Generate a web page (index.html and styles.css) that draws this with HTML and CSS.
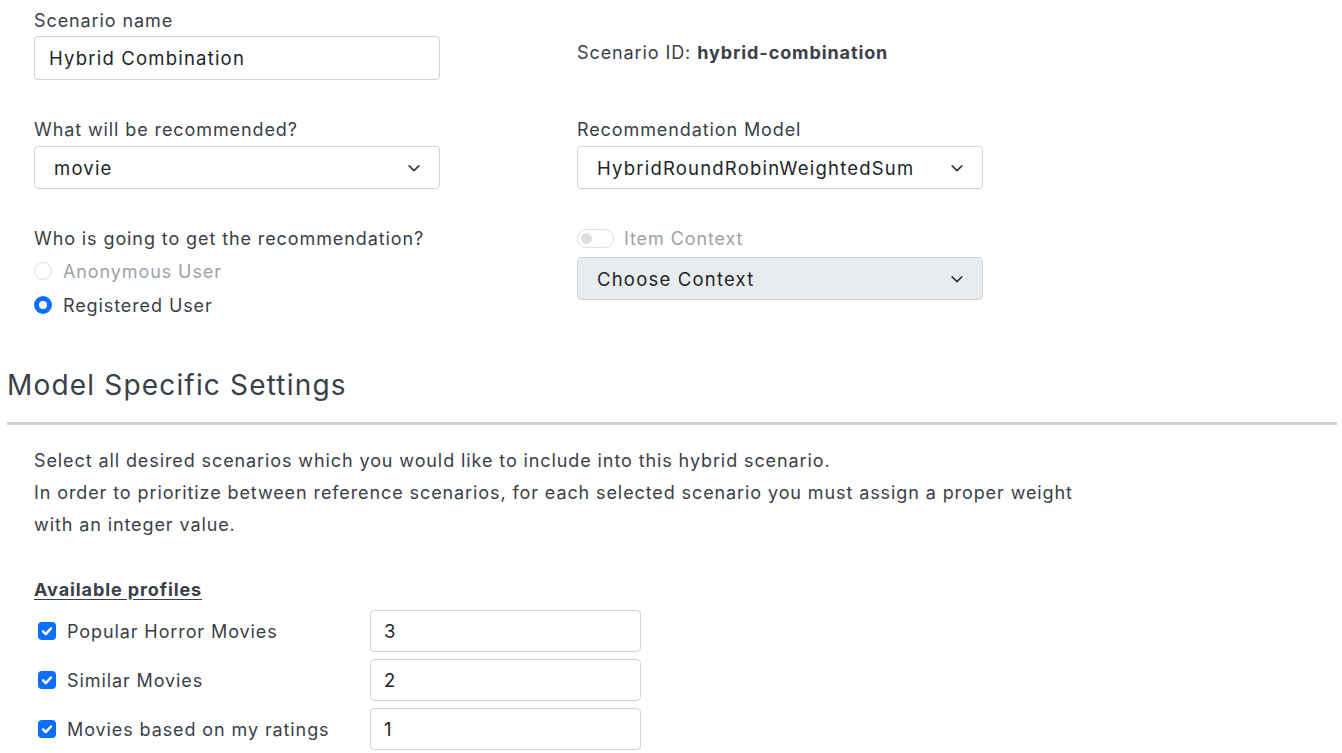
FILE: index.html
```html
<!DOCTYPE html>
<html>
<head>
<meta charset="utf-8">
<link rel="stylesheet" href="styles.css">
</head>
<body>
<div class="page">
  <div class="form-grid">
    <div class="field">
      <label class="label">Scenario name</label>
      <div class="input">Hybrid Combination</div>
    </div>
    <div class="field id-field">
      <div class="scenario-id">Scenario ID: <b>hybrid-combination</b></div>
    </div>

    <div class="field">
      <label class="label">What will be recommended?</label>
      <div class="select">movie<svg class="chev" viewBox="0 0 16 16"><path d="M2.5 5.5l5.5 5.5 5.5-5.5" fill="none" stroke="#343a40" stroke-width="1.9" stroke-linecap="round" stroke-linejoin="round"/></svg></div>
    </div>
    <div class="field">
      <label class="label">Recommendation Model</label>
      <div class="select">HybridRoundRobinWeightedSum<svg class="chev" viewBox="0 0 16 16"><path d="M2.5 5.5l5.5 5.5 5.5-5.5" fill="none" stroke="#343a40" stroke-width="1.9" stroke-linecap="round" stroke-linejoin="round"/></svg></div>
    </div>

    <div class="field">
      <label class="label">Who is going to get the recommendation?</label>
      <div class="radio disabled"><span class="radio-dot"></span>Anonymous User</div>
      <div class="radio"><span class="radio-dot checked"></span>Registered User</div>
    </div>
    <div class="field">
      <div class="switch-row"><span class="switch"><span class="knob"></span></span>Item Context</div>
      <div class="select grey">Choose Context<svg class="chev" viewBox="0 0 16 16"><path d="M2.5 5.5l5.5 5.5 5.5-5.5" fill="none" stroke="#343a40" stroke-width="1.9" stroke-linecap="round" stroke-linejoin="round"/></svg></div>
    </div>
  </div>

  <h2 class="section-title">Model Specific Settings</h2>
  <hr class="rule">

  <div class="section-body">
    <p class="intro">Select all desired scenarios which you would like to include into this hybrid scenario.<br>In order to prioritize between reference scenarios, for each selected scenario you must assign a proper weight with an integer value.</p>

    <div class="profiles-title">Available profiles</div>
    <div class="profile">
      <div class="check-label"><span class="check"><svg viewBox="0 0 16 16"><path d="M4.5 8.3l2.4 2.4 4.6-4.9" fill="none" stroke="#fff" stroke-width="2.2" stroke-linecap="round" stroke-linejoin="round"/></svg></span>Popular Horror Movies</div>
      <div class="input weight">3</div>
    </div>
    <div class="profile">
      <div class="check-label"><span class="check"><svg viewBox="0 0 16 16"><path d="M4.5 8.3l2.4 2.4 4.6-4.9" fill="none" stroke="#fff" stroke-width="2.2" stroke-linecap="round" stroke-linejoin="round"/></svg></span>Similar Movies</div>
      <div class="input weight">2</div>
    </div>
    <div class="profile">
      <div class="check-label"><span class="check"><svg viewBox="0 0 16 16"><path d="M4.5 8.3l2.4 2.4 4.6-4.9" fill="none" stroke="#fff" stroke-width="2.2" stroke-linecap="round" stroke-linejoin="round"/></svg></span>Movies based on my ratings</div>
      <div class="input weight">1</div>
    </div>
  </div>
</div>
</body>
</html>
```
FILE: styles.css
```css
html, body {
  margin: 0;
  padding: 0;
  background: #fff;
}
body {
  font-family: Inter, "Noto Sans", sans-serif;
  font-size: 18px;
  letter-spacing: 0.05em;
  color: #3a4048;
}
.page {
  padding: 0 5px 0 7px;
}
.form-grid {
  display: grid;
  grid-template-columns: 406px 406px;
  column-gap: 137px;
  padding-left: 27px;
}
.field {
  display: flex;
  flex-direction: column;
}
.label {
  display: block;
  line-height: 24px;
  margin-top: 9px;
  margin-bottom: 3px;
}
.input, .select {
  box-sizing: border-box;
  border: 1px solid #ced4da;
  border-radius: 4px;
  background: #fff;
  color: #212529;
  display: flex;
  align-items: center;
  position: relative;
  font-size: 18.5px;
  letter-spacing: 1.2px;
}
.input {
  height: 44px;
  padding: 0 14px;
}
.select {
  height: 43px;
  padding: 0 18px 0 19px;
  justify-content: space-between;
}
.select.grey {
  background: #e9ecef;
}
.chev {
  width: 14px;
  height: 14px;
}
.id-field {
  padding-top: 28px;
}
.scenario-id {
  line-height: 24px;
  margin-top: 13px;
}
.scenario-id b {
  font-weight: 700;
}
.form-grid .field:nth-child(3), .form-grid .field:nth-child(4) {
  margin-top: 30px;
}
.form-grid .field:nth-child(3) .label, .form-grid .field:nth-child(4) .label {
  margin-top: 8px;
  margin-bottom: 4px;
}
.form-grid .field:nth-child(5), .form-grid .field:nth-child(6) {
  margin-top: 29px;
}
.radio {
  display: flex;
  align-items: center;
  height: 34px;
}
.radio.disabled {
  color: #9ea2a7;
}
.radio-dot {
  box-sizing: border-box;
  width: 18px;
  height: 18px;
  border-radius: 50%;
  border: 1px solid #dcdfe2;
  margin-right: 11px;
  background: #fff;
}
.radio-dot.checked {
  border: 5px solid #0d6efd;
  background: #fff;
}
.switch-row {
  display: flex;
  align-items: center;
  height: 24px;
  margin-top: 8px;
  margin-bottom: 7px;
  color: #9ea2a7;
}
.switch {
  box-sizing: border-box;
  width: 37px;
  height: 19px;
  border: 1px solid #dcdfe2;
  border-radius: 10px;
  margin-right: 10px;
  position: relative;
  display: inline-block;
}
.knob {
  position: absolute;
  left: 3px;
  top: 3px;
  width: 11px;
  height: 11px;
  border-radius: 50%;
  background: #dcdfe2;
}
.section-title {
  font-size: 28px;
  font-weight: 400;
  letter-spacing: 0.042em;
  margin: 45px 0 0;
  line-height: 36px;
  color: #3a4048;
}
.rule {
  border: 0;
  height: 3px;
  background: #ced1d5;
  margin: 19px 0 0;
}
.section-body {
  padding-left: 27px;
}
.intro {
  max-width: 1045px;
  line-height: 32px;
  margin: 20px 0 0;
}
.profiles-title {
  font-weight: 700;
  text-decoration: underline;
  text-underline-offset: 3px;
  margin-top: 37px;
  line-height: 24px;
}
.profile {
  display: flex;
  align-items: center;
  margin-top: 8px;
}
.profile + .profile {
  margin-top: 7px;
}
.check-label {
  width: 336px;
  display: flex;
  align-items: center;
}
.check {
  width: 18px;
  height: 18px;
  border-radius: 4px;
  background: #0d6efd;
  margin-left: 4px;
  margin-right: 11px;
  display: inline-flex;
}
.check svg {
  width: 18px;
  height: 18px;
}
.weight {
  width: 271px;
  height: 42px;
  padding: 0 13px;
}
```
